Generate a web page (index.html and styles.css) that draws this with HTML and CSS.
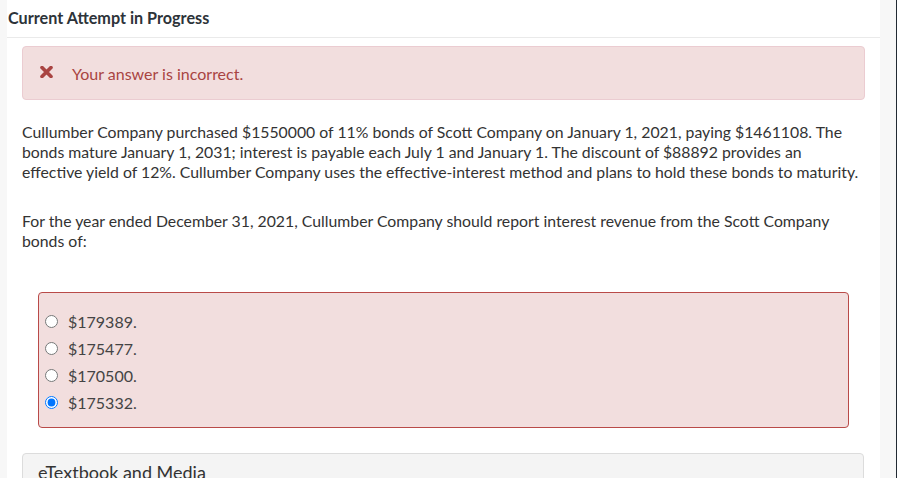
FILE: index.html
```html
<!DOCTYPE html>
<html>
<head>
<meta charset="utf-8">
<link rel="stylesheet" href="styles.css">
</head>
<body>
<div class="page">
  <div class="side-left"></div>
  <div class="main">
    <div class="header">Current Attempt in Progress</div>
    <div class="content">
      <div class="alert">
        <svg class="x-icon" width="13" height="12" viewBox="0 0 13 12"><path d="M2 1.5 L11 10.5 M11 1.5 L2 10.5" stroke="#a94442" stroke-width="3.6" stroke-linecap="round"/></svg>
        <span>Your answer is incorrect.</span>
      </div>
      <p class="para">Cullumber Company purchased $1550000 of 11% bonds of Scott Company on January 1, 2021, paying $1461108. The<br>bonds mature January 1, 2031; interest is payable each July 1 and January 1. The discount of $88892 provides an<br>effective yield of 12%. Cullumber Company uses the effective-interest method and plans to hold these bonds to maturity.</p>
      <p class="para para2">For the year ended December 31, 2021, Cullumber Company should report interest revenue from the Scott Company<br>bonds of:</p>
      <div class="options">
        <label class="opt"><input type="radio" name="a"><span>$179389.</span></label>
        <label class="opt"><input type="radio" name="a"><span>$175477.</span></label>
        <label class="opt"><input type="radio" name="a"><span>$170500.</span></label>
        <label class="opt"><input type="radio" name="a" checked><span>$175332.</span></label>
      </div>
      <div class="media">eTextbook and Media</div>
    </div>
  </div>
  <div class="side-right"></div>
</div>
</body>
</html>
```

FILE: styles.css
```css
html, body {
  margin: 0;
  padding: 0;
  height: 100%;
  overflow: hidden;
}
body {
  font-family: Lato, "Open Sans", sans-serif;
  color: #333;
  background: #fff;
}
.page {
  display: flex;
  width: 897px;
  height: 478px;
  overflow: hidden;
}
.side-left {
  width: 7px;
  flex: none;
  background: #f7f7f7;
}
.side-right {
  width: 16px;
  flex: none;
  background: #f7f7f7;
  border-right: 1px solid #222a33;
}
.main {
  flex: 1;
  background: #fff;
  overflow: hidden;
}
.header {
  height: 38px;
  line-height: 36px;
  box-sizing: border-box;
  border-bottom: 1px solid #eaeaea;
  font-weight: 700;
  font-size: 16.2px;
  padding-left: 1px;
  color: #2d3339;
}
.content {
  padding: 8px 15px 0 15px;
}
.alert {
  height: 54px;
  box-sizing: border-box;
  background: #f2dede;
  border: 1px solid #ebccd1;
  border-radius: 4px;
  display: flex;
  align-items: center;
  padding-left: 17px;
  color: #a94442;
  font-size: 16px;
}
.x-icon {
  margin-right: 19px;
  margin-top: -3px;
}
.para {
  margin: 22px 0 0 0;
  font-size: 15.8px;
  line-height: 20px;
  color: #333;
  white-space: nowrap;
}
.para2 {
  margin-top: 29px;
}
.options {
  margin: 41px 16px 0 16px;
  height: 136px;
  box-sizing: border-box;
  background: #f2dede;
  border: 1px solid #b94a48;
  border-radius: 4px;
  padding: 15px 0 0 3px;
  display: flex;
  flex-direction: column;
}
.opt {
  display: flex;
  align-items: center;
  height: 27px;
  font-size: 16px;
  color: #444;
}
.opt input {
  margin: 0 10px 0 3px;
  width: 13px;
  height: 13px;
}
.media {
  margin-top: 25px;
  margin-right: 1px;
  height: 40px;
  box-sizing: border-box;
  background: #f4f4f4;
  border: 1px solid #dcdcdc;
  border-radius: 4px 4px 0 0;
  padding: 7px 0 0 15px;
  font-size: 18px;
  color: #333;
}
```
